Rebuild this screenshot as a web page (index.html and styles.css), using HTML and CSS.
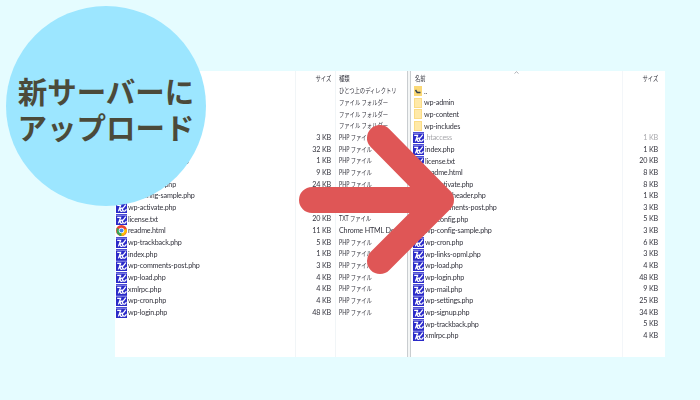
FILE: index.html
```html
<!DOCTYPE html>
<html lang="ja">
<head>
<meta charset="utf-8">
<title>新サーバーにアップロード</title>
<link rel="stylesheet" href="styles.css">
</head>
<body>
<svg class="defs" width="0" height="0" aria-hidden="true">
  <symbol id="php" viewBox="0 0 11 11">
    <rect width="11" height="11" fill="#2a2ac8"/>
    <path d="M1.2 3.4h3.4L2.4 9.4M6.4 9.4a1.7 1.7 0 1 1 .1-3.2M9.8 2.6 7.4 5.8a1.8 1.8 0 1 0 2.6 1.2" fill="none" stroke="#fff" stroke-width="1.25"/>
    <path d="M0 1.2h11" stroke="#a8a8f0" stroke-width=".9"/>
  </symbol>
  <symbol id="folder" viewBox="0 0 8 10">
    <rect width="8" height="10" fill="#fbdc86"/>
    <rect x="1" y="1" width="6" height="8" fill="#ffe9a8"/>
  </symbol>
  <symbol id="up" viewBox="0 0 8 10">
    <rect width="8" height="10" fill="#fbd977"/>
    <path d="M1.5 4 3.2 6.5H6.5" fill="none" stroke="#33424f" stroke-width="1.4"/>
  </symbol>
  <symbol id="chrome" viewBox="0 0 12 12">
    <circle cx="6" cy="6" r="6" fill="#ea4335"/>
    <path d="M6 6 .8 3 .9 9 4 11.7 6.8 12z" fill="#34a853"/>
    <path d="M6 6 11.6 4 12 7 9 11.2 6 12z" fill="#fbbc05"/>
    <circle cx="6" cy="6" r="3" fill="#fff"/>
    <circle cx="6" cy="6" r="2.2" fill="#4285f4"/>
  </symbol>
</svg>

<main class="window">
  <section class="pane pane-left">
    <div class="row head"><span class="name"></span><span class="size"><span class="jp-end">サイズ</span></span><span class="type"><span class="jp">種類</span></span></div>
    <div class="row"><span class="name"><svg class="fd"><use href="#up"/></svg>..</span><span class="size"></span><span class="type"><span class="jp">ひとつ上のディレクトリ</span></span></div>
    <div class="row"><span class="name"><svg class="fd"><use href="#folder"/></svg>wp-admin</span><span class="size"></span><span class="type"><span class="jp">ファイル フォルダー</span></span></div>
    <div class="row"><span class="name"><svg class="fd"><use href="#folder"/></svg>wp-content</span><span class="size"></span><span class="type"><span class="jp">ファイル フォルダー</span></span></div>
    <div class="row"><span class="name"><svg class="fd"><use href="#folder"/></svg>wp-includes</span><span class="size"></span><span class="type"><span class="jp">ファイル フォルダー</span></span></div>
    <div class="row"><span class="name"><svg class="ic"><use href="#php"/></svg>wp-links-opml.php</span><span class="size">3 KB</span><span class="type"><span class="jp">PHP ファイル</span></span></div>
    <div class="row"><span class="name"><svg class="ic"><use href="#php"/></svg>wp-signup.php</span><span class="size">32 KB</span><span class="type"><span class="jp">PHP ファイル</span></span></div>
    <div class="row"><span class="name"><svg class="ic"><use href="#php"/></svg>wp-blog-header.php</span><span class="size">1 KB</span><span class="type"><span class="jp">PHP ファイル</span></span></div>
    <div class="row"><span class="name"><svg class="ic"><use href="#php"/></svg>wp-mail.php</span><span class="size">9 KB</span><span class="type"><span class="jp">PHP ファイル</span></span></div>
    <div class="row"><span class="name"><svg class="ic"><use href="#php"/></svg>wp-settings.php</span><span class="size">24 KB</span><span class="type"><span class="jp">PHP ファイル</span></span></div>
    <div class="row"><span class="name"><svg class="ic"><use href="#php"/></svg>wp-config-sample.php</span><span class="size"></span><span class="type"><span class="jp">PHP ファイル</span></span></div>
    <div class="row"><span class="name"><svg class="ic"><use href="#php"/></svg>wp-activate.php</span><span class="size"></span><span class="type"><span class="jp">PHP ファイル</span></span></div>
    <div class="row"><span class="name"><svg class="ic"><use href="#php"/></svg>license.txt</span><span class="size">20 KB</span><span class="type"><span class="jp">TXT ファイル</span></span></div>
    <div class="row"><span class="name"><svg class="ic"><use href="#chrome"/></svg>readme.html</span><span class="size">11 KB</span><span class="type">Chrome HTML Document</span></div>
    <div class="row"><span class="name"><svg class="ic"><use href="#php"/></svg>wp-trackback.php</span><span class="size">5 KB</span><span class="type"><span class="jp">PHP ファイル</span></span></div>
    <div class="row"><span class="name"><svg class="ic"><use href="#php"/></svg>index.php</span><span class="size">1 KB</span><span class="type"><span class="jp">PHP ファイル</span></span></div>
    <div class="row"><span class="name"><svg class="ic"><use href="#php"/></svg>wp-comments-post.php</span><span class="size">3 KB</span><span class="type"><span class="jp">PHP ファイル</span></span></div>
    <div class="row"><span class="name"><svg class="ic"><use href="#php"/></svg>wp-load.php</span><span class="size">4 KB</span><span class="type"><span class="jp">PHP ファイル</span></span></div>
    <div class="row"><span class="name"><svg class="ic"><use href="#php"/></svg>xmlrpc.php</span><span class="size">4 KB</span><span class="type"><span class="jp">PHP ファイル</span></span></div>
    <div class="row"><span class="name"><svg class="ic"><use href="#php"/></svg>wp-cron.php</span><span class="size">4 KB</span><span class="type"><span class="jp">PHP ファイル</span></span></div>
    <div class="row"><span class="name"><svg class="ic"><use href="#php"/></svg>wp-login.php</span><span class="size">48 KB</span><span class="type"><span class="jp">PHP ファイル</span></span></div>
  </section>
  <div class="splitter"></div>
  <section class="pane pane-right">
    <div class="row head"><span class="name"><span class="jp">名前</span><svg class="sort" viewBox="0 0 5 3" aria-hidden="true"><path d="M.5 2.5 2.5.7 4.5 2.5" fill="none" stroke="#8a8f96" stroke-width=".7"/></svg></span><span class="size"><span class="jp-end">サイズ</span></span></div>
    <div class="row"><span class="name"><svg class="fd"><use href="#up"/></svg>..</span><span class="size"></span></div>
    <div class="row"><span class="name"><svg class="fd"><use href="#folder"/></svg>wp-admin</span><span class="size"></span></div>
    <div class="row"><span class="name"><svg class="fd"><use href="#folder"/></svg>wp-content</span><span class="size"></span></div>
    <div class="row"><span class="name"><svg class="fd"><use href="#folder"/></svg>wp-includes</span><span class="size"></span></div>
    <div class="row faded"><span class="name"><svg class="ic"><use href="#php"/></svg>.htaccess</span><span class="size">1 KB</span></div>
    <div class="row"><span class="name"><svg class="ic"><use href="#php"/></svg>index.php</span><span class="size">1 KB</span></div>
    <div class="row"><span class="name"><svg class="ic"><use href="#php"/></svg>license.txt</span><span class="size">20 KB</span></div>
    <div class="row"><span class="name"><svg class="ic"><use href="#chrome"/></svg>readme.html</span><span class="size">8 KB</span></div>
    <div class="row"><span class="name"><svg class="ic"><use href="#php"/></svg>wp-activate.php</span><span class="size">8 KB</span></div>
    <div class="row"><span class="name"><svg class="ic"><use href="#php"/></svg>wp-blog-header.php</span><span class="size">1 KB</span></div>
    <div class="row"><span class="name"><svg class="ic"><use href="#php"/></svg>wp-comments-post.php</span><span class="size">3 KB</span></div>
    <div class="row"><span class="name"><svg class="ic"><use href="#php"/></svg>wp-config.php</span><span class="size">5 KB</span></div>
    <div class="row"><span class="name"><svg class="ic"><use href="#php"/></svg>wp-config-sample.php</span><span class="size">3 KB</span></div>
    <div class="row"><span class="name"><svg class="ic"><use href="#php"/></svg>wp-cron.php</span><span class="size">6 KB</span></div>
    <div class="row"><span class="name"><svg class="ic"><use href="#php"/></svg>wp-links-opml.php</span><span class="size">3 KB</span></div>
    <div class="row"><span class="name"><svg class="ic"><use href="#php"/></svg>wp-load.php</span><span class="size">4 KB</span></div>
    <div class="row"><span class="name"><svg class="ic"><use href="#php"/></svg>wp-login.php</span><span class="size">48 KB</span></div>
    <div class="row"><span class="name"><svg class="ic"><use href="#php"/></svg>wp-mail.php</span><span class="size">9 KB</span></div>
    <div class="row"><span class="name"><svg class="ic"><use href="#php"/></svg>wp-settings.php</span><span class="size">25 KB</span></div>
    <div class="row"><span class="name"><svg class="ic"><use href="#php"/></svg>wp-signup.php</span><span class="size">34 KB</span></div>
    <div class="row"><span class="name"><svg class="ic"><use href="#php"/></svg>wp-trackback.php</span><span class="size">5 KB</span></div>
    <div class="row"><span class="name"><svg class="ic"><use href="#php"/></svg>xmlrpc.php</span><span class="size">4 KB</span></div>
  </section>
</main>

<svg class="arrow" viewBox="0 0 700 400" aria-hidden="true">
  <path d="M312 200H441M380 138 441 200 380 261" fill="none" stroke="#df5656" stroke-width="26" stroke-linecap="round" stroke-linejoin="round"/>
</svg>

<div class="badge"><p>新サーバーに<br>アップロード</p></div>
</body>
</html>
```
FILE: styles.css
```css
* { box-sizing: border-box; }

html, body { margin: 0; height: 100%; }

body {
  position: relative;
  width: 700px;
  height: 400px;
  overflow: hidden;
  background: #e5fcff;
}

.defs { position: absolute; }

.window {
  display: flex;
  width: 550px;
  height: 286px;
  margin: 71px 0 0 115px;
  padding-right: 3px;
  background: #fff;
  font-family: "Lato", "Noto Sans CJK JP", sans-serif;
  font-size: 7.2px;
  letter-spacing: -.18px;
  color: #34343e;
}

.pane-left {
  width: 292px;
  --name: 180px;
  --size: 40px;
  background:
    linear-gradient(#f1f5f7, #f1f5f7) 180px 0 / 1px 100% no-repeat,
    linear-gradient(#f1f5f7, #f1f5f7) 220px 0 / 1px 100% no-repeat;
}

.pane-right {
  flex: 1;
  --name: 211px;
  --size: 40px;
  background: linear-gradient(#f3f6f9, #f3f6f9) 211px 0 / 1px 100% no-repeat;
}

.splitter {
  width: 4px;
  border-left: 1px solid #c9cdd0;
  border-right: 1px solid #c9cdd0;
  background: #f4f6f6;
}

.row {
  display: flex;
  align-items: center;
  height: 11.65px;
  white-space: nowrap;
  filter: blur(.35px);
}

.row.head { height: 14.4px; }

.name {
  position: relative;
  display: flex;
  align-items: center;
  gap: 1px;
  width: var(--name);
  height: 100%;
  padding-left: 1px;
  overflow: hidden;
}

.pane-right .name { padding-left: 2px; }
.pane-right .head .name { padding-left: 4px; }

.sort {
  position: absolute;
  left: 103px;
  top: 0;
  width: 5px;
  height: 3px;
}

.size {
  width: var(--size);
  height: 100%;
  line-height: 11.65px;
  padding-right: 4px;
  text-align: right;
}

.type {
  flex: 1;
  height: 100%;
  line-height: 11.65px;
  padding-left: 4px;
  overflow: hidden;
}

.head .size, .head .type { line-height: 14.4px; }

.jp, .jp-end {
  display: inline-block;
  font-size: 6.8px;
  letter-spacing: 0;
  transform: scaleX(.78);
}

.jp { transform-origin: left center; }
.jp-end { transform-origin: right center; }

.faded { color: #a8a8ac; }

.ic {
  flex: none;
  width: 11px;
  height: 11px;
}

.fd {
  flex: none;
  width: 8px;
  height: 10px;
  margin: 0 1px;
}

.arrow {
  position: absolute;
  inset: 0;
  width: 700px;
  height: 400px;
}

.badge {
  position: absolute;
  left: 6px;
  top: 6px;
  display: flex;
  align-items: center;
  justify-content: center;
  width: 200px;
  height: 200px;
  padding-top: 4px;
  border-radius: 50%;
  background: #9ce6ff;
}

.badge p {
  margin: 0;
  font-family: "Noto Sans CJK JP", sans-serif;
  font-size: 29.5px;
  font-weight: 700;
  line-height: 36px;
  text-align: center;
  color: #4b4a3a;
}
```
